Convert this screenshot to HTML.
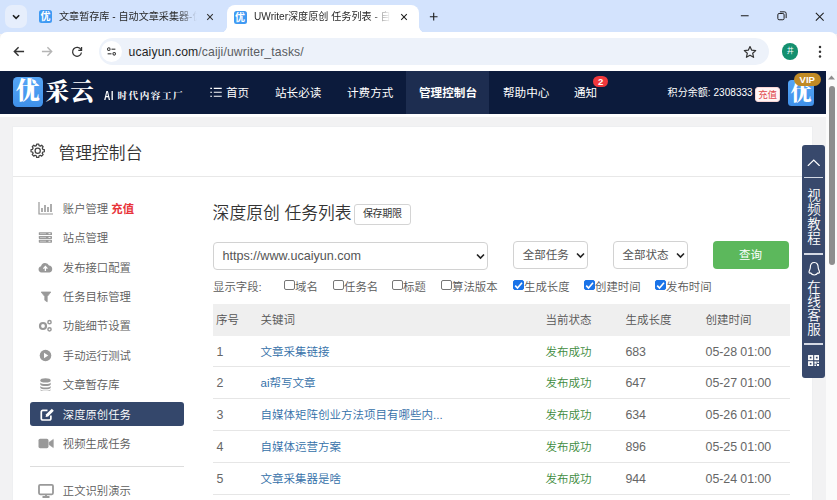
<!DOCTYPE html>
<html lang="zh-CN">
<head>
<meta charset="utf-8">
<title>UWriter深度原创 任务列表</title>
<style>
*{box-sizing:border-box;margin:0;padding:0}
html,body{width:837px;height:500px;overflow:hidden;background:#f2f2f3;font-family:"Liberation Sans","Noto Sans CJK SC",sans-serif;color:#333}
.abs{position:absolute}
/* browser chrome */
#tabs{position:absolute;left:0;top:0;width:837px;height:34px;background:#d3e3fd}
#tabs .chev{position:absolute;left:5.3px;top:5.3px;width:21.7px;height:22.3px;border-radius:7px;background:#e6eefc}
.tab{position:absolute;top:0;height:33px;font-size:10.1px;color:#2a2a2a;white-space:nowrap;overflow:hidden}
.tab .t{position:absolute;top:9px;left:30px;line-height:16px;-webkit-mask-image:linear-gradient(90deg,#000 85%,transparent 100%);mask-image:linear-gradient(90deg,#000 85%,transparent 100%)}
.fav{position:absolute;top:10px;width:13px;height:13px;border-radius:2.5px;background:#3f9af3;color:#fff;font-size:10px;line-height:13px;text-align:center;font-weight:700}
#tab2{left:226.5px;width:192.5px;background:#fff;border-radius:8px 8px 0 0;top:4.5px;height:28.5px;overflow:visible}
#tab2:before,#tab2:after{content:'';position:absolute;bottom:0;width:7px;height:7px}
#tab2:before{left:-7px;background:radial-gradient(circle at 0 0,transparent 6.6px,#fff 7.2px)}
#tab2:after{right:-7px;background:radial-gradient(circle at 100% 0,transparent 6.6px,#fff 7.2px)}
#toolbar{position:absolute;left:0;top:32px;width:837px;height:39px;background:#fff;border-radius:7px 7px 0 0}
#url{position:absolute;left:99px;top:6px;width:670px;height:27px;border-radius:13.5px;background:#edf2fa}
#url .chip{position:absolute;left:1.5px;top:3px;width:21px;height:21px;border-radius:11px;background:#fff}
#url .u{position:absolute;left:29.6px;top:4.6px;font-size:12.2px;line-height:18px;color:#1f1f1f;letter-spacing:.12px}
/* site nav */
#nav{position:absolute;left:0;top:71px;width:826px;height:43px;background:#0c1b3c;color:#fff}
#nav .it{position:absolute;top:1px;height:42px;line-height:42px;font-size:11.6px;white-space:nowrap}
#nav .act{position:absolute;left:406px;top:0;width:83px;height:43px;background:#1d2d50}
/* scrollbar */
#sb{position:absolute;left:826px;top:71px;width:11px;height:429px;background:#fbfbfb}
#sb .th{position:absolute;left:2.6px;top:15px;width:6.6px;height:179px;background:#8e8e8e;border-radius:3.3px}
/* page */
#panel{position:absolute;left:11.5px;top:126px;width:801.5px;height:400px;background:#fff;border:1px solid #eeeff1}
#ph{position:absolute;left:0;top:0;width:799px;height:50px;border-bottom:1px solid #e8e8e8}
#ph .tt{position:absolute;left:46px;top:14.8px;font-size:16.8px;line-height:24px;color:#333;font-weight:350}
.sit{position:absolute;left:62.8px;font-weight:350;font-size:11.35px;line-height:18px;color:#5c5c5c;white-space:nowrap}
.sic{position:absolute;left:38px;width:15px;height:13px}
#sact{position:absolute;left:30px;top:402px;width:154px;height:24px;border-radius:3px;background:#34476b}
h2{position:absolute;left:212.6px;top:202px;font-size:16.8px;font-weight:350;line-height:24px;color:#333;white-space:nowrap}
.btn0{position:absolute;left:353.6px;top:204.3px;width:57.4px;height:20.4px;border:1px solid #d4d4d4;border-radius:3px;font-size:10px;line-height:18px;text-align:center;color:#333;letter-spacing:-.3px;background:#fff}
.sel{position:absolute;top:241.3px;height:27.7px;border:1px solid #d2d2d2;border-radius:4px;background:#fff;font-size:11.5px;line-height:27.6px;color:#555;padding-left:8px;white-space:nowrap}
.sel svg{position:absolute;right:2px;top:10px}
.q{position:absolute;left:712.5px;top:241px;width:76px;height:27.7px;border-radius:4px;background:#5cb85c;color:#fff;font-size:11.5px;line-height:28.6px;text-align:center}
.ck{position:absolute;top:280px;font-weight:350;font-size:11.4px;line-height:14px;color:#5a5a5a;white-space:nowrap}
.cb{position:absolute;top:279.8px;width:10.6px;height:10.6px;border:1px solid #767676;border-radius:2px;background:#fff}
.cb.on{background:#1a73e8;border-color:#1a73e8}
#th{position:absolute;left:212.6px;top:304px;width:577px;height:31.6px;background:#efefef}
#th .c{top:6.5px}
.c{position:absolute;font-weight:350;font-size:11.5px;line-height:18px;white-space:nowrap;color:#555}
.row{position:absolute;left:212.6px;width:577px;height:31.8px;border-bottom:1px solid #e6e6e6}
.row .c{top:7px}
.c.n{font-size:12.4px;color:#666;letter-spacing:-.25px}
.lnk{color:#336fa8}
.ok{color:#3d8b3d}
/* float bar */
#fl{position:absolute;left:802px;top:144.5px;width:22.5px;height:233.5px;background:#38496c;border-radius:3px;color:#fff}
#fl .v{position:absolute;left:.8px;width:22.5px;text-align:center;font-size:13.5px;line-height:14.2px;font-weight:350}
#fl .ln{position:absolute;left:2px;width:18.5px;height:1.6px;background:#d4d9e4}
</style>
</head>
<body>
<!-- tab strip -->
<div id="tabs">
  <div class="chev"><svg class="abs" style="left:0;top:-.8px" width="22" height="24" viewBox="0 0 22 24"><path d="M8 10.2 L11.1 13.3 L14.2 10.2" fill="none" stroke="#1f1f1f" stroke-width="1.6"/></svg></div>
  <div class="tab" id="tab1" style="left:33px;width:190px">
    <div class="fav" style="left:6px">优</div>
    <div class="t" style="left:26px;width:138px;overflow:hidden">文章暂存库 - 自动文章采集器-优采云</div>
    <svg class="abs" style="left:173px;top:12.5px" width="8" height="8" viewBox="0 0 10 10"><path d="M1.5 1.5 L8.5 8.5 M8.5 1.5 L1.5 8.5" stroke="#333" stroke-width="1.3"/></svg>
  </div>
  <div class="tab" id="tab2">
    <div class="fav" style="left:7px;top:6px">优</div>
    <div class="t" style="left:27.5px;top:4.5px;width:137px;overflow:hidden">UWriter深度原创 任务列表 - 自动文章</div>
    <svg class="abs" style="left:173.5px;top:8px" width="8" height="8" viewBox="0 0 10 10"><path d="M1.5 1.5 L8.5 8.5 M8.5 1.5 L1.5 8.5" stroke="#1f1f1f" stroke-width="1.3"/></svg>
  </div>
  <svg class="abs" style="left:429px;top:11.6px" width="9.4" height="9.4" viewBox="0 0 11 11"><path d="M5.5 1 V10 M1 5.5 H10" stroke="#1f1f1f" stroke-width="1.3"/></svg>
  <svg class="abs" style="left:739.5px;top:11px" width="9.5" height="9.5" viewBox="0 0 11 11"><path d="M1 5.5 H10" stroke="#1f1f1f" stroke-width="1.2"/></svg>
  <svg class="abs" style="left:776.5px;top:11px" width="10" height="10" viewBox="0 0 12 12"><rect x="1" y="3" width="7.5" height="7.5" rx="1.5" fill="none" stroke="#1f1f1f" stroke-width="1.2"/><path d="M3.5 1 H9 a2 2 0 0 1 2 2 V8.5" fill="none" stroke="#1f1f1f" stroke-width="1.2"/></svg>
  <svg class="abs" style="left:814.5px;top:11.5px" width="9.5" height="9.5" viewBox="0 0 11 11"><path d="M1 1 L10 10 M10 1 L1 10" stroke="#1f1f1f" stroke-width="1.2"/></svg>
</div>
<!-- toolbar -->
<div id="toolbar">
  <svg class="abs" style="left:12.6px;top:14px" width="12" height="11" viewBox="0 0 14 13"><path d="M13 6.5 H2 M6.5 1.5 L1.5 6.5 L6.5 11.5" fill="none" stroke="#333" stroke-width="1.7"/></svg>
  <svg class="abs" style="left:41.2px;top:14px" width="12" height="11" viewBox="0 0 14 13"><path d="M1 6.5 H12 M7.5 1.5 L12.5 6.5 L7.5 11.5" fill="none" stroke="#b5b5b5" stroke-width="1.7"/></svg>
  <svg class="abs" style="left:71.3px;top:13.8px" width="12" height="12" viewBox="0 0 14 14"><path d="M11.6 4.2 A5.2 5.2 0 1 0 12.2 7.6" fill="none" stroke="#333" stroke-width="1.5"/><path d="M12.3 1.2 V5 H8.5" fill="none" stroke="#333" stroke-width="1.5"/></svg>
  <div id="url">
    <div class="chip"><svg class="abs" style="left:2.6px;top:1.8px" width="17" height="17" viewBox="0 0 22 22"><circle cx="7.5" cy="8" r="1.7" fill="none" stroke="#333" stroke-width="1.3"/><path d="M11 8 H16" stroke="#333" stroke-width="1.4"/><circle cx="14.5" cy="14" r="1.7" fill="none" stroke="#333" stroke-width="1.3"/><path d="M6 14 H11" stroke="#333" stroke-width="1.4"/></svg></div>
    <div class="u">ucaiyun.com<span style="color:#5a5d62">/caiji/uwriter_tasks/</span></div>
    <svg class="abs" style="left:644px;top:6.6px" width="14" height="14" viewBox="0 0 14 14"><path d="M7 1.5 L8.7 5.2 L12.7 5.6 L9.7 8.3 L10.6 12.3 L7 10.2 L3.4 12.3 L4.3 8.3 L1.3 5.6 L5.3 5.2 Z" fill="none" stroke="#333" stroke-width="1.2" stroke-linejoin="round"/></svg>
  </div>
  <div class="abs" style="left:782px;top:11.2px;width:16.4px;height:16.4px;border-radius:9px;background:#14906f;color:#fff;font-size:7px;line-height:16.4px;text-align:center">井</div>
  <svg class="abs" style="left:818px;top:13.2px" width="4" height="13.4" viewBox="0 0 4 14"><circle cx="2" cy="2" r="1.3" fill="#333"/><circle cx="2" cy="7" r="1.3" fill="#333"/><circle cx="2" cy="12" r="1.3" fill="#333"/></svg>
</div>
<!-- site nav -->
<div id="nav">
  <div class="act"></div>
  <div class="abs" style="left:13px;top:6.2px;width:29.5px;height:30px;border-radius:4.5px;background:linear-gradient(180deg,#55a6f6,#3f90ea);color:#fff;font-size:24px;line-height:29px;text-align:center;font-weight:900;font-family:'Liberation Serif','Noto Serif CJK SC',serif">优</div>
  <div class="abs" style="left:45.5px;top:4.2px;font-size:23.6px;line-height:34px;font-weight:900;letter-spacing:1.2px;white-space:nowrap;font-family:'Liberation Serif','Noto Serif CJK SC',serif">采云</div>
  <div class="abs" style="left:104px;top:16.5px;font-size:9.6px;line-height:16px;font-weight:700;letter-spacing:1.55px;white-space:nowrap;font-family:'Liberation Sans','Noto Serif CJK SC',serif"><span style="display:inline-block;width:13.4px;font-size:12.4px;font-weight:700;letter-spacing:1.2px;transform:scaleX(.7);transform-origin:0 50%;vertical-align:-.6px">AI</span>时代内容工厂</div>
  <svg class="abs" style="left:210px;top:16px" width="12" height="10.6" viewBox="0 0 13 12"><path d="M0 1.5 H2 M4 1.5 H13 M0 6 H2 M4 6 H13 M0 10.5 H2 M4 10.5 H13" stroke="#fff" stroke-width="1.3"/></svg>
  <div class="it" style="left:226px">首页</div>
  <div class="it" style="left:275px">站长必读</div>
  <div class="it" style="left:347px">计费方式</div>
  <div class="it" style="left:419px;font-weight:700">管理控制台</div>
  <div class="it" style="left:503px">帮助中心</div>
  <div class="it" style="left:574px">通知</div>
  <div class="abs" style="left:593.4px;top:4.6px;width:14.6px;height:11.4px;border-radius:6px;background:#f0383c;font-size:9.5px;line-height:11.4px;text-align:center;font-weight:700">2</div>
  <div class="it" style="left:667.6px;font-size:10px;letter-spacing:.05px">积分余额: 2308333</div>
  <div class="abs" style="left:755px;top:16px;width:25px;height:14.5px;border-radius:3px;background:#fff6f6;color:#e0494d;font-size:9.5px;line-height:13px;text-align:center;letter-spacing:-.3px;border:1px solid #f6d4d4">充值</div>
  <div class="abs" style="left:788px;top:9px;width:26px;height:25.5px;border-radius:3.5px;background:linear-gradient(180deg,#55a6f6,#3f90ea);color:#fff;font-size:21px;line-height:27px;text-align:center;font-weight:900;font-family:'Liberation Serif','Noto Serif CJK SC',serif">优</div>
  <div class="abs" style="left:794px;top:2px;width:26.5px;height:13px;border-radius:6.5px;background:#c08a25;color:#fff;font-size:9.5px;line-height:13px;text-align:center;font-weight:700">VIP</div>
</div>
<div class="abs" style="left:0;top:114px;width:826px;height:2.7px;background:#fff"></div>
<!-- scrollbar -->
<div id="sb"><svg class="abs" style="left:2px;top:4px" width="7" height="5" viewBox="0 0 7 5"><path d="M3.5 .5 L7 4.5 H0 Z" fill="#8e8e8e"/></svg><div class="th"></div></div>
<!-- panel -->
<div id="panel">
  <div id="ph">
    <svg class="abs" style="left:17px;top:15.8px" width="15.4" height="15.4" viewBox="0 0 16 16"><circle cx="8" cy="8" r="2.7" fill="none" stroke="#444" stroke-width="1.3"/><path d="M6.90 1.09 L9.10 1.09 L9.41 2.68 L10.76 3.24 L12.11 2.34 L13.66 3.89 L12.76 5.24 L13.32 6.59 L14.91 6.90 L14.91 9.10 L13.32 9.41 L12.76 10.76 L13.66 12.11 L12.11 13.66 L10.76 12.76 L9.41 13.32 L9.10 14.91 L6.90 14.91 L6.59 13.32 L5.24 12.76 L3.89 13.66 L2.34 12.11 L3.24 10.76 L2.68 9.41 L1.09 9.10 L1.09 6.90 L2.68 6.59 L3.24 5.24 L2.34 3.89 L3.89 2.34 L5.24 3.24 L6.59 2.68 Z" fill="none" stroke="#444" stroke-width="1.3" stroke-linejoin="round"/></svg>
    <div class="tt">管理控制台</div>
  </div>
</div>
<!-- sidebar -->
<div id="sact"></div>
<div class="sit" style="top:199.8px">账户管理 <span style="color:#e8343a;font-weight:700">充值</span></div>
<div class="sit" style="top:228.8px">站点管理</div>
<div class="sit" style="top:258.8px">发布接口配置</div>
<div class="sit" style="top:287.8px">任务目标管理</div>
<div class="sit" style="top:316.8px">功能细节设置</div>
<div class="sit" style="top:346.8px">手动运行测试</div>
<div class="sit" style="top:375.8px">文章暂存库</div>
<div class="sit" style="top:405.8px;color:#fff">深度原创任务</div>
<div class="sit" style="top:434.8px">视频生成任务</div>
<div class="abs" style="left:30px;top:466px;width:154px;height:1px;background:#ddd"></div>
<div class="sit" style="top:481.8px">正文识别演示</div>
<!-- sidebar icons -->
<svg class="sic" style="top:202px" viewBox="0 0 15 13"><path d="M1 0 V12 H15" fill="none" stroke="#999" stroke-width="1.2"/><path d="M4 10 V6 M7 10 V3 M10 10 V5 M13 10 V2" stroke="#999" stroke-width="1.6"/></svg>
<svg class="sic" style="top:231px" viewBox="0 0 15 13"><rect x=".8" y="1.2" width="13.2" height="2.9" rx=".6" fill="#9a9a9a"/><rect x=".8" y="5" width="13.2" height="2.9" rx=".6" fill="#9a9a9a"/><rect x=".8" y="8.8" width="13.2" height="2.9" rx=".6" fill="#9a9a9a"/><path d="M2 2.65 H8 M2 6.45 H8 M2 10.25 H8" stroke="#cfcfcf" stroke-width=".8"/><path d="M10.5 2.65 H12.5 M10.5 6.45 H12.5 M10.5 10.25 H12.5" stroke="#fff" stroke-width=".9"/></svg>
<svg class="sic" style="top:261px" viewBox="0 0 15 13"><path d="M3.5 11.5 A3.2 3.2 0 0 1 3 5.2 A4.2 4.2 0 0 1 11 4.6 A3.5 3.5 0 0 1 11.5 11.5 Z" fill="#999"/><path d="M7.4 10 V6 M5.4 7.6 L7.4 5.4 L9.4 7.6" stroke="#fff" stroke-width="1.3" fill="none"/></svg>
<svg class="sic" style="top:290px" viewBox="0 0 15 13"><path d="M3.2 2 H12.8 L9.2 6.6 V11.8 L6.8 10.2 V6.6 Z" fill="#999" stroke="#999" stroke-width=".8" stroke-linejoin="round"/></svg>
<svg class="sic" style="top:319px" viewBox="0 0 15 13"><circle cx="5" cy="7" r="3" fill="none" stroke="#999" stroke-width="2.2"/><circle cx="11.5" cy="3.2" r="1.6" fill="none" stroke="#999" stroke-width="1.5"/><circle cx="11.5" cy="10.3" r="1.6" fill="none" stroke="#999" stroke-width="1.5"/></svg>
<svg class="sic" style="top:349px" viewBox="0 0 15 13"><circle cx="7.5" cy="6.5" r="5.8" fill="#999"/><path d="M6 3.8 L10.3 6.5 L6 9.2 Z" fill="#fff"/></svg>
<svg class="sic" style="top:378px" viewBox="0 0 15 13"><ellipse cx="7.5" cy="2.4" rx="5.2" ry="2.1" fill="#999"/><path d="M2.3 4.6 C3 6.6 12 6.6 12.7 4.6 V6.4 C12 8.4 3 8.4 2.3 6.4 Z M2.3 8 C3 10 12 10 12.7 8 V9.8 C12 11.8 3 11.8 2.3 9.8 Z M2.3 11.3 C3 13.3 12 13.3 12.7 11.3 V12 C12 14 3 14 2.3 12 Z" fill="#999"/></svg>
<svg class="sic" style="top:407px;left:38.5px;width:17px;height:14.7px" viewBox="0 0 15 13"><path d="M10.5 7.5 V10.2 a1.3 1.3 0 0 1 -1.3 1.3 H3.3 a1.3 1.3 0 0 1 -1.3 -1.3 V4.3 a1.3 1.3 0 0 1 1.3 -1.3 H7.5" fill="none" stroke="#fff" stroke-width="1.5"/><path d="M5.8 8.8 L6.3 6.5 L11.3 1.5 L13.1 3.3 L8.1 8.3 Z" fill="#fff"/></svg>
<svg class="sic" style="top:437px;width:16px" viewBox="0 0 16 13"><rect x="0.5" y="1.8" width="10" height="9.4" rx="1.6" fill="#999"/><path d="M11.1 5.3 L15.3 2.4 V10.6 L11.1 7.7 Z" fill="#999" stroke="#999" stroke-width=".6" stroke-linejoin="round"/></svg>
<svg class="sic" style="top:484px;width:16px;height:14px" viewBox="0 0 16 14"><rect x="1" y="0.9" width="14" height="9.4" rx="1.2" fill="none" stroke="#999" stroke-width="1.8"/><path d="M4.5 13 H11.5 M8 10.5 V13" stroke="#999" stroke-width="1.8"/></svg>
<!-- main -->
<h2>深度原创 任务列表</h2>
<div class="btn0">保存期限</div>
<div class="sel" style="left:213px;width:275px;font-size:12.6px;top:242px;line-height:27px;padding-left:8.5px">https://www.ucaiyun.com<svg width="9" height="7" viewBox="0 0 9 7"><path d="M1 1.5 L4.5 5 L8 1.5" fill="none" stroke="#222" stroke-width="1.6"/></svg></div>
<div class="sel" style="left:513.3px;width:74.5px;padding-left:8.5px">全部任务<svg width="9" height="7" viewBox="0 0 9 7"><path d="M1 1.5 L4.5 5 L8 1.5" fill="none" stroke="#222" stroke-width="1.6"/></svg></div>
<div class="sel" style="left:613px;width:74.5px;padding-left:8.5px">全部状态<svg width="9" height="7" viewBox="0 0 9 7"><path d="M1 1.5 L4.5 5 L8 1.5" fill="none" stroke="#222" stroke-width="1.6"/></svg></div>
<div class="q">查询</div>
<div class="ck" style="left:213px">显示字段:</div>
<div class="cb" style="left:284px"></div><div class="ck" style="left:295px">域名</div>
<div class="cb" style="left:333px"></div><div class="ck" style="left:344px">任务名</div>
<div class="cb" style="left:392px"></div><div class="ck" style="left:403px">标题</div>
<div class="cb" style="left:441px"></div><div class="ck" style="left:452px">算法版本</div>
<div class="cb on" style="left:513px"><svg class="abs" style="left:-1px;top:-1px" width="11" height="11" viewBox="0 0 11 11"><path d="M2.2 5.6 L4.5 8 L9 2.8" fill="none" stroke="#fff" stroke-width="1.6"/></svg></div><div class="ck" style="left:524px">生成长度</div>
<div class="cb on" style="left:584px"><svg class="abs" style="left:-1px;top:-1px" width="11" height="11" viewBox="0 0 11 11"><path d="M2.2 5.6 L4.5 8 L9 2.8" fill="none" stroke="#fff" stroke-width="1.6"/></svg></div><div class="ck" style="left:595px">创建时间</div>
<div class="cb on" style="left:655px"><svg class="abs" style="left:-1px;top:-1px" width="11" height="11" viewBox="0 0 11 11"><path d="M2.2 5.6 L4.5 8 L9 2.8" fill="none" stroke="#fff" stroke-width="1.6"/></svg></div><div class="ck" style="left:666px">发布时间</div>
<div id="th">
  <div class="c" style="left:3.5px">序号</div>
  <div class="c" style="left:48px">关键词</div>
  <div class="c" style="left:333px">当前状态</div>
  <div class="c" style="left:413px">生成长度</div>
  <div class="c" style="left:493px">创建时间</div>
</div>
<div class="row" style="top:335.6px"><div class="c n" style="left:4px">1</div><div class="c lnk" style="left:48px">文章采集链接</div><div class="c ok" style="left:333px">发布成功</div><div class="c n" style="left:413px">683</div><div class="c n" style="left:493px;letter-spacing:-.06px">05-28 01:00</div></div>
<div class="row" style="top:367.4px"><div class="c n" style="left:4px">2</div><div class="c lnk" style="left:48px">ai帮写文章</div><div class="c ok" style="left:333px">发布成功</div><div class="c n" style="left:413px">647</div><div class="c n" style="left:493px;letter-spacing:-.06px">05-27 01:00</div></div>
<div class="row" style="top:399.2px"><div class="c n" style="left:4px">3</div><div class="c lnk" style="left:48px">自媒体矩阵创业方法项目有哪些内...</div><div class="c ok" style="left:333px">发布成功</div><div class="c n" style="left:413px">634</div><div class="c n" style="left:493px;letter-spacing:-.06px">05-26 01:00</div></div>
<div class="row" style="top:431.0px"><div class="c n" style="left:4px">4</div><div class="c lnk" style="left:48px">自媒体运营方案</div><div class="c ok" style="left:333px">发布成功</div><div class="c n" style="left:413px">896</div><div class="c n" style="left:493px;letter-spacing:-.06px">05-25 01:00</div></div>
<div class="row" style="top:462.8px"><div class="c n" style="left:4px">5</div><div class="c lnk" style="left:48px">文章采集器是啥</div><div class="c ok" style="left:333px">发布成功</div><div class="c n" style="left:413px">944</div><div class="c n" style="left:493px;letter-spacing:-.06px">05-24 01:00</div></div>
<!-- float bar -->
<div id="fl">
  <svg class="abs" style="left:4.5px;top:14px" width="13.5" height="7.5" viewBox="0 0 14 8"><path d="M.7 7.3 L7 1.2 L13.3 7.3" fill="none" stroke="#fff" stroke-width="1.3"/></svg>
  <div class="ln" style="top:32.2px"></div>
  <div class="v" style="top:44.7px">视<br>频<br>教<br>程</div>
  <div class="ln" style="top:108.5px"></div>
  <svg class="abs" style="left:5.5px;top:116px" width="12.5" height="15.5" viewBox="0 0 12 14"><path d="M6 1 C3 1 2.2 3.5 2.2 6 C2.2 7.5 1 8.8 1 10.2 C1 11.5 2 11.3 2.5 11 C3.3 12.3 4.5 13 6 13 C7.5 13 8.7 12.3 9.5 11 C10 11.3 11 11.5 11 10.2 C11 8.8 9.8 7.5 9.8 6 C9.8 3.5 9 1 6 1 Z" fill="none" stroke="#fff" stroke-width="1.1"/></svg>
  <div class="v" style="top:136px">在<br>线<br>客<br>服</div>
  <div class="ln" style="top:198.6px"></div>
  <svg class="abs" style="left:5.8px;top:210.3px" width="11.4" height="11.4" viewBox="0 0 10 10"><rect x=".8" y=".8" width="3" height="3" fill="none" stroke="#fff" stroke-width="1.5"/><rect x="6.2" y=".8" width="3" height="3" fill="none" stroke="#fff" stroke-width="1.5"/><rect x=".8" y="6.2" width="3" height="3" fill="none" stroke="#fff" stroke-width="1.5"/><path d="M5.6 5.6 H7.6 V7.6 H5.6 Z M8.2 5.6 H10 V7 H8.2 Z M5.6 8.3 H7 V10 H5.6 Z M7.8 8 H10 V10 H7.8 Z" fill="#fff"/></svg>
</div>
</body>
</html>
